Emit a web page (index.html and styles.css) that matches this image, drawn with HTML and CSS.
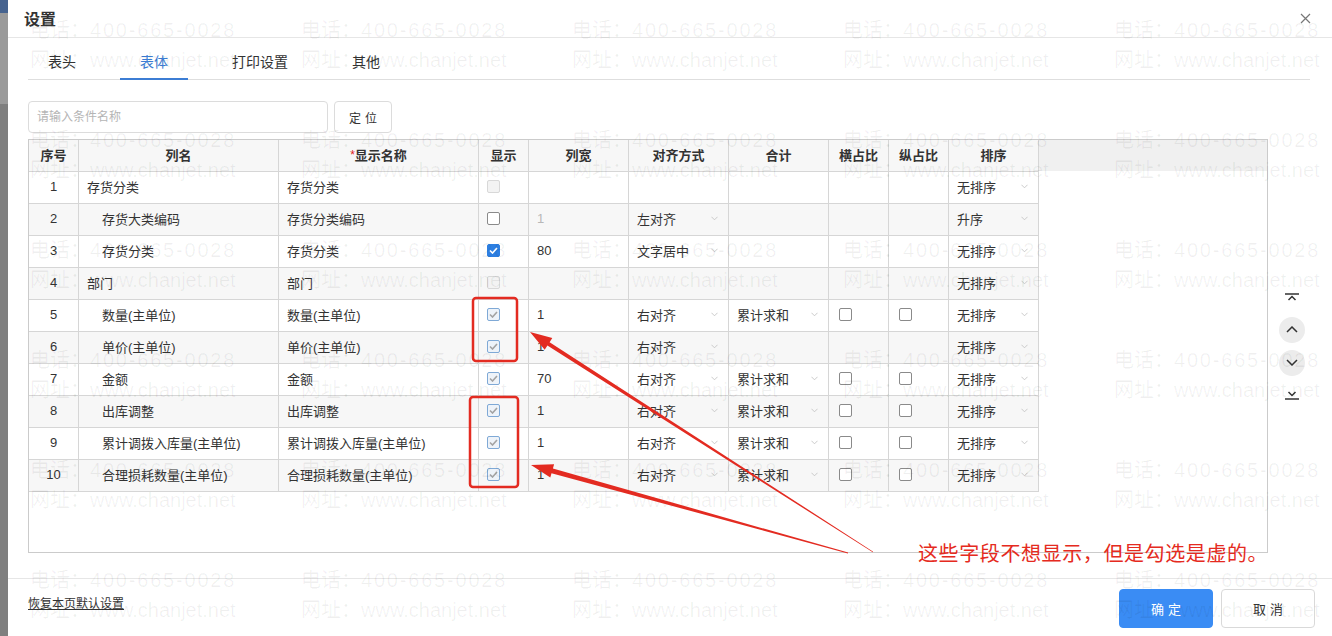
FILE: index.html
```html
<!DOCTYPE html>
<html lang="zh-CN">
<head>
    <meta charset="UTF-8">
    <title>设置</title>
    <link rel="stylesheet" href="styles.css">
</head>
<body>
    <div class="backdrop"></div>
    <div class="dialog">
        <div class="dlg-head">
            <span class="dlg-title">设置</span>
            <span class="dlg-close">
                <svg width="11" height="11" viewBox="0 0 11 11"><path d="M1 1L10 10M10 1L1 10" stroke="#777" stroke-width="1.2"/></svg>
            </span>
        </div>
        <div class="dlg-body">
            <div class="tabs">
                <div class="tab">表头</div>
                <div class="tab active">表体</div>
                <div class="tab">打印设置</div>
                <div class="tab">其他</div>
            </div>
            <div class="search-row">
                <input class="search-input" type="text" placeholder="请输入条件名称">
                <button class="btn-locate">定位</button>
            </div>
            <div class="table-area">
                <div class="grid-box">
                    <div class="grid-row grid-head">
                        <div>序号</div>
                        <div>列名</div>
                        <div><span class="req">*</span>显示名称</div>
                        <div>显示</div>
                        <div>列宽</div>
                        <div>对齐方式</div>
                        <div>合计</div>
                        <div>横占比</div>
                        <div>纵占比</div>
                        <div>排序</div>
                    </div>

                    <div class="grid-row">
                        <div class="c-no">1</div>
                        <div>存货分类</div>
                        <div>存货分类</div>
                        <div><span class="cb off"></span></div>
                        <div></div>
                        <div></div>
                        <div></div>
                        <div></div>
                        <div></div>
                        <div class="c-sel"><span>无排序</span><svg class="chev" viewBox="0 0 8 5"><path d="M0.5 0.5L4 4L7.5 0.5"/></svg></div>
                    </div>

                    <div class="grid-row">
                        <div class="c-no">2</div>
                        <div class="indent">存货大类编码</div>
                        <div>存货分类编码</div>
                        <div><span class="cb"></span></div>
                        <div class="muted">1</div>
                        <div class="c-sel"><span>左对齐</span><svg class="chev" viewBox="0 0 8 5"><path d="M0.5 0.5L4 4L7.5 0.5"/></svg></div>
                        <div></div>
                        <div></div>
                        <div></div>
                        <div class="c-sel"><span>升序</span><svg class="chev" viewBox="0 0 8 5"><path d="M0.5 0.5L4 4L7.5 0.5"/></svg></div>
                    </div>

                    <div class="grid-row">
                        <div class="c-no">3</div>
                        <div class="indent">存货分类</div>
                        <div>存货分类</div>
                        <div><span class="cb on"><svg viewBox="0 0 9 7"><path d="M1 3.5L3.5 6L8 1"/></svg></span></div>
                        <div>80</div>
                        <div class="c-sel"><span>文字居中</span><svg class="chev" viewBox="0 0 8 5"><path d="M0.5 0.5L4 4L7.5 0.5"/></svg></div>
                        <div></div>
                        <div></div>
                        <div></div>
                        <div class="c-sel"><span>无排序</span><svg class="chev" viewBox="0 0 8 5"><path d="M0.5 0.5L4 4L7.5 0.5"/></svg></div>
                    </div>

                    <div class="grid-row">
                        <div class="c-no">4</div>
                        <div>部门</div>
                        <div>部门</div>
                        <div><span class="cb off"></span></div>
                        <div></div>
                        <div></div>
                        <div></div>
                        <div></div>
                        <div></div>
                        <div class="c-sel"><span>无排序</span><svg class="chev" viewBox="0 0 8 5"><path d="M0.5 0.5L4 4L7.5 0.5"/></svg></div>
                    </div>

                    <div class="grid-row">
                        <div class="c-no">5</div>
                        <div class="indent">数量(主单位)</div>
                        <div>数量(主单位)</div>
                        <div><span class="cb ghost"><svg viewBox="0 0 9 7"><path d="M1 3.5L3.5 6L8 1"/></svg></span></div>
                        <div>1</div>
                        <div class="c-sel"><span>右对齐</span><svg class="chev" viewBox="0 0 8 5"><path d="M0.5 0.5L4 4L7.5 0.5"/></svg></div>
                        <div class="c-sel"><span>累计求和</span><svg class="chev" viewBox="0 0 8 5"><path d="M0.5 0.5L4 4L7.5 0.5"/></svg></div>
                        <div class="c-cb"><span class="cb"></span></div>
                        <div class="c-cb"><span class="cb"></span></div>
                        <div class="c-sel"><span>无排序</span><svg class="chev" viewBox="0 0 8 5"><path d="M0.5 0.5L4 4L7.5 0.5"/></svg></div>
                    </div>

                    <div class="grid-row">
                        <div class="c-no">6</div>
                        <div class="indent">单价(主单位)</div>
                        <div>单价(主单位)</div>
                        <div><span class="cb ghost"><svg viewBox="0 0 9 7"><path d="M1 3.5L3.5 6L8 1"/></svg></span></div>
                        <div>1</div>
                        <div class="c-sel"><span>右对齐</span><svg class="chev" viewBox="0 0 8 5"><path d="M0.5 0.5L4 4L7.5 0.5"/></svg></div>
                        <div></div>
                        <div></div>
                        <div></div>
                        <div class="c-sel"><span>无排序</span><svg class="chev" viewBox="0 0 8 5"><path d="M0.5 0.5L4 4L7.5 0.5"/></svg></div>
                    </div>

                    <div class="grid-row">
                        <div class="c-no">7</div>
                        <div class="indent">金额</div>
                        <div>金额</div>
                        <div><span class="cb ghost"><svg viewBox="0 0 9 7"><path d="M1 3.5L3.5 6L8 1"/></svg></span></div>
                        <div>70</div>
                        <div class="c-sel"><span>右对齐</span><svg class="chev" viewBox="0 0 8 5"><path d="M0.5 0.5L4 4L7.5 0.5"/></svg></div>
                        <div class="c-sel"><span>累计求和</span><svg class="chev" viewBox="0 0 8 5"><path d="M0.5 0.5L4 4L7.5 0.5"/></svg></div>
                        <div class="c-cb"><span class="cb"></span></div>
                        <div class="c-cb"><span class="cb"></span></div>
                        <div class="c-sel"><span>无排序</span><svg class="chev" viewBox="0 0 8 5"><path d="M0.5 0.5L4 4L7.5 0.5"/></svg></div>
                    </div>

                    <div class="grid-row">
                        <div class="c-no">8</div>
                        <div class="indent">出库调整</div>
                        <div>出库调整</div>
                        <div><span class="cb ghost"><svg viewBox="0 0 9 7"><path d="M1 3.5L3.5 6L8 1"/></svg></span></div>
                        <div>1</div>
                        <div class="c-sel"><span>右对齐</span><svg class="chev" viewBox="0 0 8 5"><path d="M0.5 0.5L4 4L7.5 0.5"/></svg></div>
                        <div class="c-sel"><span>累计求和</span><svg class="chev" viewBox="0 0 8 5"><path d="M0.5 0.5L4 4L7.5 0.5"/></svg></div>
                        <div class="c-cb"><span class="cb"></span></div>
                        <div class="c-cb"><span class="cb"></span></div>
                        <div class="c-sel"><span>无排序</span><svg class="chev" viewBox="0 0 8 5"><path d="M0.5 0.5L4 4L7.5 0.5"/></svg></div>
                    </div>

                    <div class="grid-row">
                        <div class="c-no">9</div>
                        <div class="indent">累计调拨入库量(主单位)</div>
                        <div>累计调拨入库量(主单位)</div>
                        <div><span class="cb ghost"><svg viewBox="0 0 9 7"><path d="M1 3.5L3.5 6L8 1"/></svg></span></div>
                        <div>1</div>
                        <div class="c-sel"><span>右对齐</span><svg class="chev" viewBox="0 0 8 5"><path d="M0.5 0.5L4 4L7.5 0.5"/></svg></div>
                        <div class="c-sel"><span>累计求和</span><svg class="chev" viewBox="0 0 8 5"><path d="M0.5 0.5L4 4L7.5 0.5"/></svg></div>
                        <div class="c-cb"><span class="cb"></span></div>
                        <div class="c-cb"><span class="cb"></span></div>
                        <div class="c-sel"><span>无排序</span><svg class="chev" viewBox="0 0 8 5"><path d="M0.5 0.5L4 4L7.5 0.5"/></svg></div>
                    </div>

                    <div class="grid-row">
                        <div class="c-no">10</div>
                        <div class="indent">合理损耗数量(主单位)</div>
                        <div>合理损耗数量(主单位)</div>
                        <div><span class="cb ghost"><svg viewBox="0 0 9 7"><path d="M1 3.5L3.5 6L8 1"/></svg></span></div>
                        <div>1</div>
                        <div class="c-sel"><span>右对齐</span><svg class="chev" viewBox="0 0 8 5"><path d="M0.5 0.5L4 4L7.5 0.5"/></svg></div>
                        <div class="c-sel"><span>累计求和</span><svg class="chev" viewBox="0 0 8 5"><path d="M0.5 0.5L4 4L7.5 0.5"/></svg></div>
                        <div class="c-cb"><span class="cb"></span></div>
                        <div class="c-cb"><span class="cb"></span></div>
                        <div class="c-sel"><span>无排序</span><svg class="chev" viewBox="0 0 8 5"><path d="M0.5 0.5L4 4L7.5 0.5"/></svg></div>
                    </div>
                </div>

                <div class="side-nav">
                    <svg class="nav-edge" width="16" height="14" viewBox="0 0 16 14"><path d="M1 4H15M4.5 10L8 6.5L11.5 10"/></svg>
                    <span class="nav-circle up"><svg width="12" height="7" viewBox="0 0 12 7"><path d="M1 6L6 1L11 6"/></svg></span>
                    <span class="nav-circle"><svg width="12" height="7" viewBox="0 0 12 7"><path d="M1 1L6 6L11 1"/></svg></span>
                    <svg class="nav-edge" width="16" height="14" viewBox="0 0 16 14"><path d="M4.5 3L8 6.5L11.5 3M1 10H15"/></svg>
                </div>
            </div>
        </div>
        <div class="dlg-foot">
            <a class="reset-link">恢复本页默认设置</a>
            <div class="foot-btns">
                <button class="btn-primary">确定</button>
                <button class="btn-plain">取消</button>
            </div>
        </div>
    </div>

    <div class="watermark">
        <div class="wm-grid">
            <div><p>电话：<span class="num">400-665-0028</span></p><p>网址：www.chanjet.net</p></div>
            <div><p>电话：<span class="num">400-665-0028</span></p><p>网址：www.chanjet.net</p></div>
            <div><p>电话：<span class="num">400-665-0028</span></p><p>网址：www.chanjet.net</p></div>
            <div><p>电话：<span class="num">400-665-0028</span></p><p>网址：www.chanjet.net</p></div>
            <div><p>电话：<span class="num">400-665-0028</span></p><p>网址：www.chanjet.net</p></div>
            <div><p>电话：<span class="num">400-665-0028</span></p><p>网址：www.chanjet.net</p></div>
            <div><p>电话：<span class="num">400-665-0028</span></p><p>网址：www.chanjet.net</p></div>
            <div><p>电话：<span class="num">400-665-0028</span></p><p>网址：www.chanjet.net</p></div>
            <div><p>电话：<span class="num">400-665-0028</span></p><p>网址：www.chanjet.net</p></div>
            <div><p>电话：<span class="num">400-665-0028</span></p><p>网址：www.chanjet.net</p></div>
            <div><p>电话：<span class="num">400-665-0028</span></p><p>网址：www.chanjet.net</p></div>
            <div><p>电话：<span class="num">400-665-0028</span></p><p>网址：www.chanjet.net</p></div>
            <div><p>电话：<span class="num">400-665-0028</span></p><p>网址：www.chanjet.net</p></div>
            <div><p>电话：<span class="num">400-665-0028</span></p><p>网址：www.chanjet.net</p></div>
            <div><p>电话：<span class="num">400-665-0028</span></p><p>网址：www.chanjet.net</p></div>
            <div><p>电话：<span class="num">400-665-0028</span></p><p>网址：www.chanjet.net</p></div>
            <div><p>电话：<span class="num">400-665-0028</span></p><p>网址：www.chanjet.net</p></div>
            <div><p>电话：<span class="num">400-665-0028</span></p><p>网址：www.chanjet.net</p></div>
            <div><p>电话：<span class="num">400-665-0028</span></p><p>网址：www.chanjet.net</p></div>
            <div><p>电话：<span class="num">400-665-0028</span></p><p>网址：www.chanjet.net</p></div>
            <div><p>电话：<span class="num">400-665-0028</span></p><p>网址：www.chanjet.net</p></div>
            <div><p>电话：<span class="num">400-665-0028</span></p><p>网址：www.chanjet.net</p></div>
            <div><p>电话：<span class="num">400-665-0028</span></p><p>网址：www.chanjet.net</p></div>
            <div><p>电话：<span class="num">400-665-0028</span></p><p>网址：www.chanjet.net</p></div>
            <div><p>电话：<span class="num">400-665-0028</span></p><p>网址：www.chanjet.net</p></div>
            <div><p>电话：<span class="num">400-665-0028</span></p><p>网址：www.chanjet.net</p></div>
            <div><p>电话：<span class="num">400-665-0028</span></p><p>网址：www.chanjet.net</p></div>
            <div><p>电话：<span class="num">400-665-0028</span></p><p>网址：www.chanjet.net</p></div>
            <div><p>电话：<span class="num">400-665-0028</span></p><p>网址：www.chanjet.net</p></div>
            <div><p>电话：<span class="num">400-665-0028</span></p><p>网址：www.chanjet.net</p></div>
        </div>
    </div>

    <!-- annotation drawn over the screenshot -->
    <svg class="marks" width="1332" height="636" viewBox="0 0 1332 636">
        <rect x="473" y="298" width="44" height="63" rx="3"/>
        <rect x="470" y="397" width="48" height="90" rx="3"/>
        <polygon points="530,332 552.3,338 549.6,342.2 873.2,551.7 872.8,552.3 547.4,345.6 544.7,349.8"/>
        <polygon points="531,465 554.1,464.2 552.9,468.5 848.1,552.6 847.9,553.4 551.5,473.3 550.3,477.6"/>
    </svg>
    <div class="note">这些字段不想显示，但是勾选是虚的。</div>
</body>
</html>
```

FILE: styles.css
```css
* {
    box-sizing: border-box;
}
body {
    margin: 0;
    width: 1332px;
    height: 636px;
    overflow: hidden;
    position: relative;
    display: flex;
    font-family: "Liberation Sans", "Noto Sans CJK SC", sans-serif;
    font-size: 13px;
    color: #333;
    background: #fff;
}
.backdrop {
    width: 8px;
    flex-shrink: 0;
    background: linear-gradient(#46638f 0 13px, #9a9a9a 13px 104px, #7f7f7f 104px);
}
.dialog {
    flex: 1;
    display: flex;
    flex-direction: column;
    background: #fff;
}
.dlg-head {
    height: 38px;
    border-bottom: 1px solid #e6e6e6;
    display: flex;
    align-items: center;
    justify-content: space-between;
    padding: 0 21px 1px 16px;
}
.dlg-title {
    font-size: 16px;
    font-weight: bold;
    color: #333;
}
.dlg-close {
    display: flex;
}
.dlg-body {
    flex: 1;
    padding: 0 22px 0 20px;
}
.tabs {
    display: flex;
    gap: 24px;
    height: 42px;
    border-bottom: 1px solid #dedede;
}
.tab {
    padding: 14px 20px 6px;
    line-height: 20px;
    font-size: 14px;
    color: #333;
    border-bottom: 2px solid transparent;
    height: 42px;
}
.tab.active {
    color: #3c7dd4;
    border-bottom-color: #3c7dd4;
}
.search-row {
    display: flex;
    margin-top: 21px;
}
.search-input {
    width: 300px;
    height: 32px;
    border: 1px solid #dcdcdc;
    border-radius: 4px;
    padding: 0 8px;
    font-family: inherit;
    font-size: 12px;
    outline: none;
}
.search-input::placeholder {
    color: #b5b5b5;
}
.btn-locate {
    margin-left: 6px;
    width: 58px;
    height: 32px;
    border: 1px solid #dcdcdc;
    border-radius: 4px;
    background: #fff;
    font-family: inherit;
    font-size: 12px;
    letter-spacing: 4px;
    padding: 0 0 0 4px;
    color: #333;
}
.table-area {
    display: flex;
    margin-top: 6px;
}
.grid-box {
    width: 1240px;
    height: 414px;
    border: 1px solid #cbcbcb;
    background: linear-gradient(#f0f0f0 0 31px, #fff 31px);
}
.grid-row {
    display: grid;
    grid-template-columns: 50px 200px 200px 50px 100px 100px 100px 60px 60px 90px;
    height: 32px;
    width: 1010px;
    background: #fff;
}
.grid-row:nth-child(odd) {
    background: #f7f7f7;
}
.grid-row > div {
    border-right: 1px solid #d6d6d6;
    border-bottom: 1px solid #d6d6d6;
    display: flex;
    align-items: center;
    padding: 0 8px 2px;
    white-space: nowrap;
    overflow: hidden;
}
.grid-head {
    background: #f0f0f0;
}
.grid-head > div {
    justify-content: center;
    font-weight: bold;
}
.req {
    color: #e0201a;
    font-size: 12px;
    line-height: 12px;
    font-weight: normal;
    align-self: flex-start;
    margin-top: 9px;
}
.grid-row > .c-no {
    justify-content: center;
}
.grid-row > .indent {
    padding-left: 23px;
}
.grid-row > .muted {
    color: #b8b8b8;
}
.grid-row > .c-sel {
    justify-content: space-between;
    padding-right: 10px;
}
.grid-row > .c-cb {
    padding-left: 10px;
}
.chev {
    width: 7px;
    height: 5px;
    fill: none;
    stroke: #c4c4c4;
    stroke-width: 1;
}
.cb {
    width: 13px;
    height: 13px;
    border: 1px solid #8a8a8a;
    border-radius: 2px;
    background: #fff;
    display: flex;
    align-items: center;
    justify-content: center;
}
.cb svg {
    width: 9px;
    height: 7px;
    fill: none;
    stroke-width: 1.6;
}
.cb.off {
    border-color: #d8d8d8;
    background: #f3f3f3;
}
.cb.on {
    background: #2d7fe2;
    border-color: #2d7fe2;
}
.cb.on svg {
    stroke: #fff;
}
.cb.ghost {
    border-color: #7fa9d6;
    background: #eef3f9;
}
.cb.ghost svg {
    stroke: #a3a3a3;
}
.side-nav {
    flex: 1;
    display: flex;
    flex-direction: column;
    align-items: center;
    justify-content: center;
    padding-left: 6px;
}
.nav-edge {
    fill: none;
    stroke: #333;
    stroke-width: 1.5;
}
.nav-circle {
    width: 26px;
    height: 26px;
    border-radius: 50%;
    background: #ececec;
    display: flex;
    align-items: center;
    justify-content: center;
    margin: 13px 0 0;
}
.nav-circle + .nav-circle {
    margin: 7px 0 13px;
}
.nav-circle svg {
    fill: none;
    stroke: #333;
    stroke-width: 1.5;
}
.dlg-foot {
    border-top: 1px solid #e6e6e6;
    margin-top: 25px;
    height: 58px;
    padding: 10px 17px 8px 20px;
    display: flex;
    justify-content: space-between;
}
.reset-link {
    font-size: 12px;
    line-height: 16px;
    margin-top: 7px;
    color: #333;
    text-decoration: underline;
}
.foot-btns {
    display: flex;
    gap: 8px;
}
.foot-btns button {
    width: 94px;
    height: 39px;
    border-radius: 4px;
    font-family: inherit;
    font-size: 13px;
    letter-spacing: 4px;
    padding: 0 0 0 4px;
}
.btn-primary {
    background: #3a8cf4;
    border: 1px solid #3a8cf4;
    color: #fff;
}
.btn-plain {
    background: #fff;
    border: 1px solid #d9d9d9;
    color: #333;
}
.watermark {
    position: absolute;
    top: 0;
    left: 0;
    width: 1332px;
    height: 636px;
    overflow: hidden;
    padding: 15px 0 0 30px;
    pointer-events: none;
}
.wm-grid {
    display: grid;
    grid-template-columns: repeat(5, 271px);
    grid-auto-rows: 110px;
    color: rgba(0, 0, 0, 0.06);
    font-size: 20px;
    line-height: 30px;
    white-space: nowrap;
}
.wm-grid p {
    margin: 0;
}
.wm-grid .num {
    letter-spacing: 1.8px;
}
.marks {
    position: absolute;
    top: 0;
    left: 0;
    pointer-events: none;
}
.marks rect {
    fill: none;
    stroke: #e32b21;
    stroke-width: 2.5;
}
.marks polygon {
    fill: #e32b21;
}
.note {
    position: absolute;
    left: 918px;
    top: 541px;
    font-family: "Noto Sans CJK SC", sans-serif;
    font-size: 20px;
    line-height: 24px;
    letter-spacing: 0.6px;
    color: #e52a20;
    white-space: nowrap;
}
```
